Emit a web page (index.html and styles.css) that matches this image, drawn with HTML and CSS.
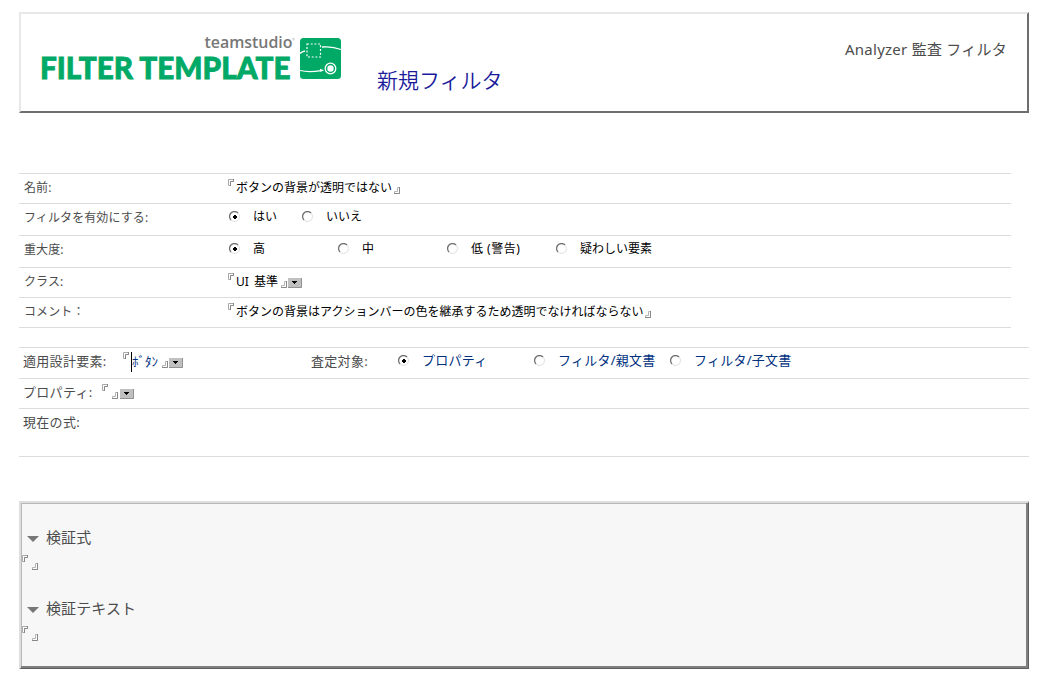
FILE: index.html
```
<!DOCTYPE html>
<html lang="ja">
<head>
<meta charset="utf-8">
<title>新規フィルタ</title>
<link rel="stylesheet" href="styles.css">
</head>
<body>
<svg class="defs" width="0" height="0">
  <symbol id="open" viewBox="0 0 6 7"><path d="M.5 6.5V.5H5.5V2.5H2.5V6.5Z" fill="#fff" stroke="#a8a8a8"/><path d="M5.500 0V2.500H2.500V7" fill="none" stroke="#888"/></symbol>
  <symbol id="close" viewBox="0 0 6 7"><path d="M5.500 .5V6.500H.5V4.500H3.500V.5Z" fill="#fff" stroke="#b4b4b4"/><path d="M5.500 0V6.500H0" fill="none" stroke="#888"/></symbol>
  <symbol id="radio" viewBox="0 0 11 11"><path d="M2 9A4.8 4.8 0 0 1 9 2" fill="none" stroke="#707070" stroke-width="1.300"/><path d="M9 2A4.8 4.8 0 0 1 2 9" fill="none" stroke="#dedede"/></symbol>
  <symbol id="radio-on" viewBox="0 0 11 11"><use href="#radio"/><path d="M5 4H7V5H8V7H7V8H5V7H4V5H5Z" fill="#000"/></symbol>
  <symbol id="drop" viewBox="0 0 14 10"><path d="M0 0H14V10H0Z" fill="#c0c0c0"/><path d="M0 9.500H13.500V0" fill="none" stroke="#929292"/><path d="M4 3H9V4H8V5H7V6H6V5H5V4H4Z" fill="#000"/></symbol>
</svg>

<header class="banner">
  <svg class="logo" width="304" height="50" viewBox="0 0 304 50">
    <text class="brand" x="163.500" y="16" textLength="88" lengthAdjust="spacingAndGlyphs">teamstudio</text>
    <circle cx="252.500" cy="7" r=".9" fill="none" stroke="#aaa" stroke-width=".5"/>
    <text class="product" x="-1" y="46.700" textLength="250.500" lengthAdjust="spacingAndGlyphs">FILTER TEMPLATE</text>
    <rect x="259" y="6" width="41" height="41" rx="3.500" fill="#00a966"/>
    <g fill="none" stroke="#fff">
      <path d="M266 12H279.500V25H266Z" stroke-dasharray="2 1.700" stroke-width="1.200"/>
      <path d="M259 21.500Q261 19.500 264 19M281 15Q291 14 300 17.500" stroke-width="1.300"/>
      <path d="M259 38.500Q268 40.500 280 38.600" stroke-width="1.200"/>
      <circle cx="289.500" cy="36.500" r="5.300" stroke-width="1.300"/>
    </g>
    <path d="M279 36.800L283 38.300L279.500 40Z" fill="#fff"/>
    <circle cx="289.500" cy="36.500" r="3.200" fill="#fff"/>
  </svg>
  <h1 class="title">新規フィルタ</h1>
  <div class="kind">Analyzer 監査 フィルタ</div>
</header>

<section class="fields">
  <div class="row name"><span class="label">名前:</span><svg class="open"><use href="#open"/></svg><span class="value">ボタンの背景が透明ではない</span><svg class="close"><use href="#close"/></svg></div>
  <div class="row enabled"><span class="label">フィルタを有効にする:</span><span class="option short"><svg class="radio"><use href="#radio-on"/></svg>はい</span><span class="option short"><svg class="radio"><use href="#radio"/></svg>いいえ</span></div>
  <div class="row severity"><span class="label">重大度:</span><span class="option"><svg class="radio"><use href="#radio-on"/></svg>高</span><span class="option"><svg class="radio"><use href="#radio"/></svg>中</span><span class="option low"><svg class="radio"><use href="#radio"/></svg>低 (警告)</span><span class="option"><svg class="radio"><use href="#radio"/></svg>疑わしい要素</span></div>
  <div class="row class"><span class="label">クラス:</span><svg class="open"><use href="#open"/></svg><span class="value ui">UI 基準</span><svg class="close"><use href="#close"/></svg><svg class="drop"><use href="#drop"/></svg></div>
  <div class="row comment"><span class="label">コメント：</span><svg class="open"><use href="#open"/></svg><span class="value">ボタンの背景はアクションバーの色を継承するため透明でなければならない</span><svg class="close"><use href="#close"/></svg></div>
</section>

<section class="formula">
  <div class="row element"><span class="label">適用設計要素:</span><svg class="open"><use href="#open"/></svg><span class="value kana">ﾎﾞﾀﾝ</span><svg class="close"><use href="#close"/></svg><svg class="drop"><use href="#drop"/></svg><span class="label target">査定対象:</span><span class="option wide"><svg class="radio"><use href="#radio-on"/></svg>プロパティ</span><span class="option wide"><svg class="radio"><use href="#radio"/></svg>フィルタ/親文書</span><span class="option wide"><svg class="radio"><use href="#radio"/></svg>フィルタ/子文書</span></div>
  <div class="row property"><span class="label">プロパティ:</span><svg class="open"><use href="#open"/></svg><svg class="close"><use href="#close"/></svg><svg class="drop"><use href="#drop"/></svg></div>
  <div class="row current"><span class="label">現在の式:</span></div>
</section>

<section class="panel">
  <h2 class="heading"><span class="twisty"></span>検証式</h2>
  <div class="empty"><svg class="open"><use href="#open"/></svg><svg class="close"><use href="#close"/></svg></div>
  <h2 class="heading"><span class="twisty"></span>検証テキスト</h2>
  <div class="empty"><svg class="open"><use href="#open"/></svg><svg class="close"><use href="#close"/></svg></div>
</section>
</body>
</html>
```
FILE: styles.css
```
* { box-sizing: border-box; }
body {
  margin: 0;
  padding: 12px 17px 5px 19px;
  background: #fff;
  color: #000;
  font: 12px/18px "Noto Sans", "Noto Sans CJK JP", sans-serif;
}
svg { display: block; flex: none; }
.defs { display: none; }
h1, h2 { margin: 0; font-weight: 400; }

.banner {
  display: flex;
  height: 101px;
  padding-left: 20px;
  border: 2px solid;
  border-color: #e8e8e8 #6e6e6e #6e6e6e #e8e8e8;
}
.logo { margin-top: 18px; overflow: visible; }
.brand { font: 600 17px "Open Sans", sans-serif; fill: #777; }
.product { font: 900 31px Lato, sans-serif; fill: #00a966; stroke: #00a966; stroke-width: .8px; }
.title {
  margin: 50px 0 0 32px;
  color: #1a1a9c;
  font-size: 21px;
  font-weight: 350;
  line-height: 32px;
}
.kind {
  margin: 23px 20px 0 auto;
  color: #4c4c4c;
  font-size: 15px;
  line-height: 24px;
  letter-spacing: .25px;
}

.fields { width: 992px; margin-top: 60px; border-bottom: 1px solid #dcdcdc; }
.row { display: flex; height: 30px; padding: 5px 0 0 5px; border-top: 1px solid #dcdcdc; white-space: nowrap; }
.label { width: 204px; color: #4c4c4c; letter-spacing: .1px; }
.open { width: 6px; height: 7px; margin-right: 2px; }
.close { width: 6px; height: 7px; margin: 8px 0 0 2px; }
.drop { width: 14px; height: 10px; margin: 5px 0 0 1px; }
.enabled, .severity { height: 32px; }
.option { display: flex; width: 109px; margin-top: -1px; }
.option.short { width: 73px; }
.option.low { letter-spacing: .5px; }
.radio { width: 11px; height: 11px; margin: 3px 13px 0 1px; }
.ui { width: 43px; word-spacing: 2px; }

.formula { margin-top: 19px; border-bottom: 1px solid #dcdcdc; }
.formula .row { padding-left: 4px; font-size: 13px; }
.formula .label { margin-top: -1px; letter-spacing: .3px; }
.formula .element { height: 31px; }
.element .label { width: 100px; }
.element .open { margin-top: -1px; margin-right: 2px; }
.element .kana {
  width: 31px;
  height: 20px;
  margin-top: -1px;
  border-left: 1px solid #000;
  color: #003080;
}
.element .close { margin-left: 0; }
.element .target { width: 87px; margin-left: 128px; }
.option.wide { width: 136px; margin-top: -2px; color: #003080; letter-spacing: .25px; }
.wide .radio { margin: 4px 13px 0 0; }
.property .label { width: 79px; }
.property .close { margin-left: 2px; }
.property .drop { margin-left: 2px; }
.formula .current { height: 48px; }

.panel {
  height: 168px;
  margin-top: 44px;
  padding: 22px 0 0 1px;
  border: solid;
  border-width: 2px 1px 1px 2px;
  border-color: #dedede #606060 #606060 #dedede;
  background: #f7f7f7;
  box-shadow: inset -2px -2px #808080, inset 1px 1px #b8b8b8;
}
.heading {
  display: flex;
  align-items: center;
  height: 24px;
  padding-left: 5px;
  color: #4c4c4c;
  font-size: 15px;
  line-height: 24px;
  letter-spacing: .1px;
}
.twisty {
  margin: 3px 7px 0 0;
  border: 6px solid transparent;
  border-top: 6px solid #777;
  border-bottom: 0;
}
.empty { display: flex; height: 47px; padding-top: 6px; }
.empty .open { margin: 0 3px 0 0; }
.empty .close { margin-left: 1px; }
```
